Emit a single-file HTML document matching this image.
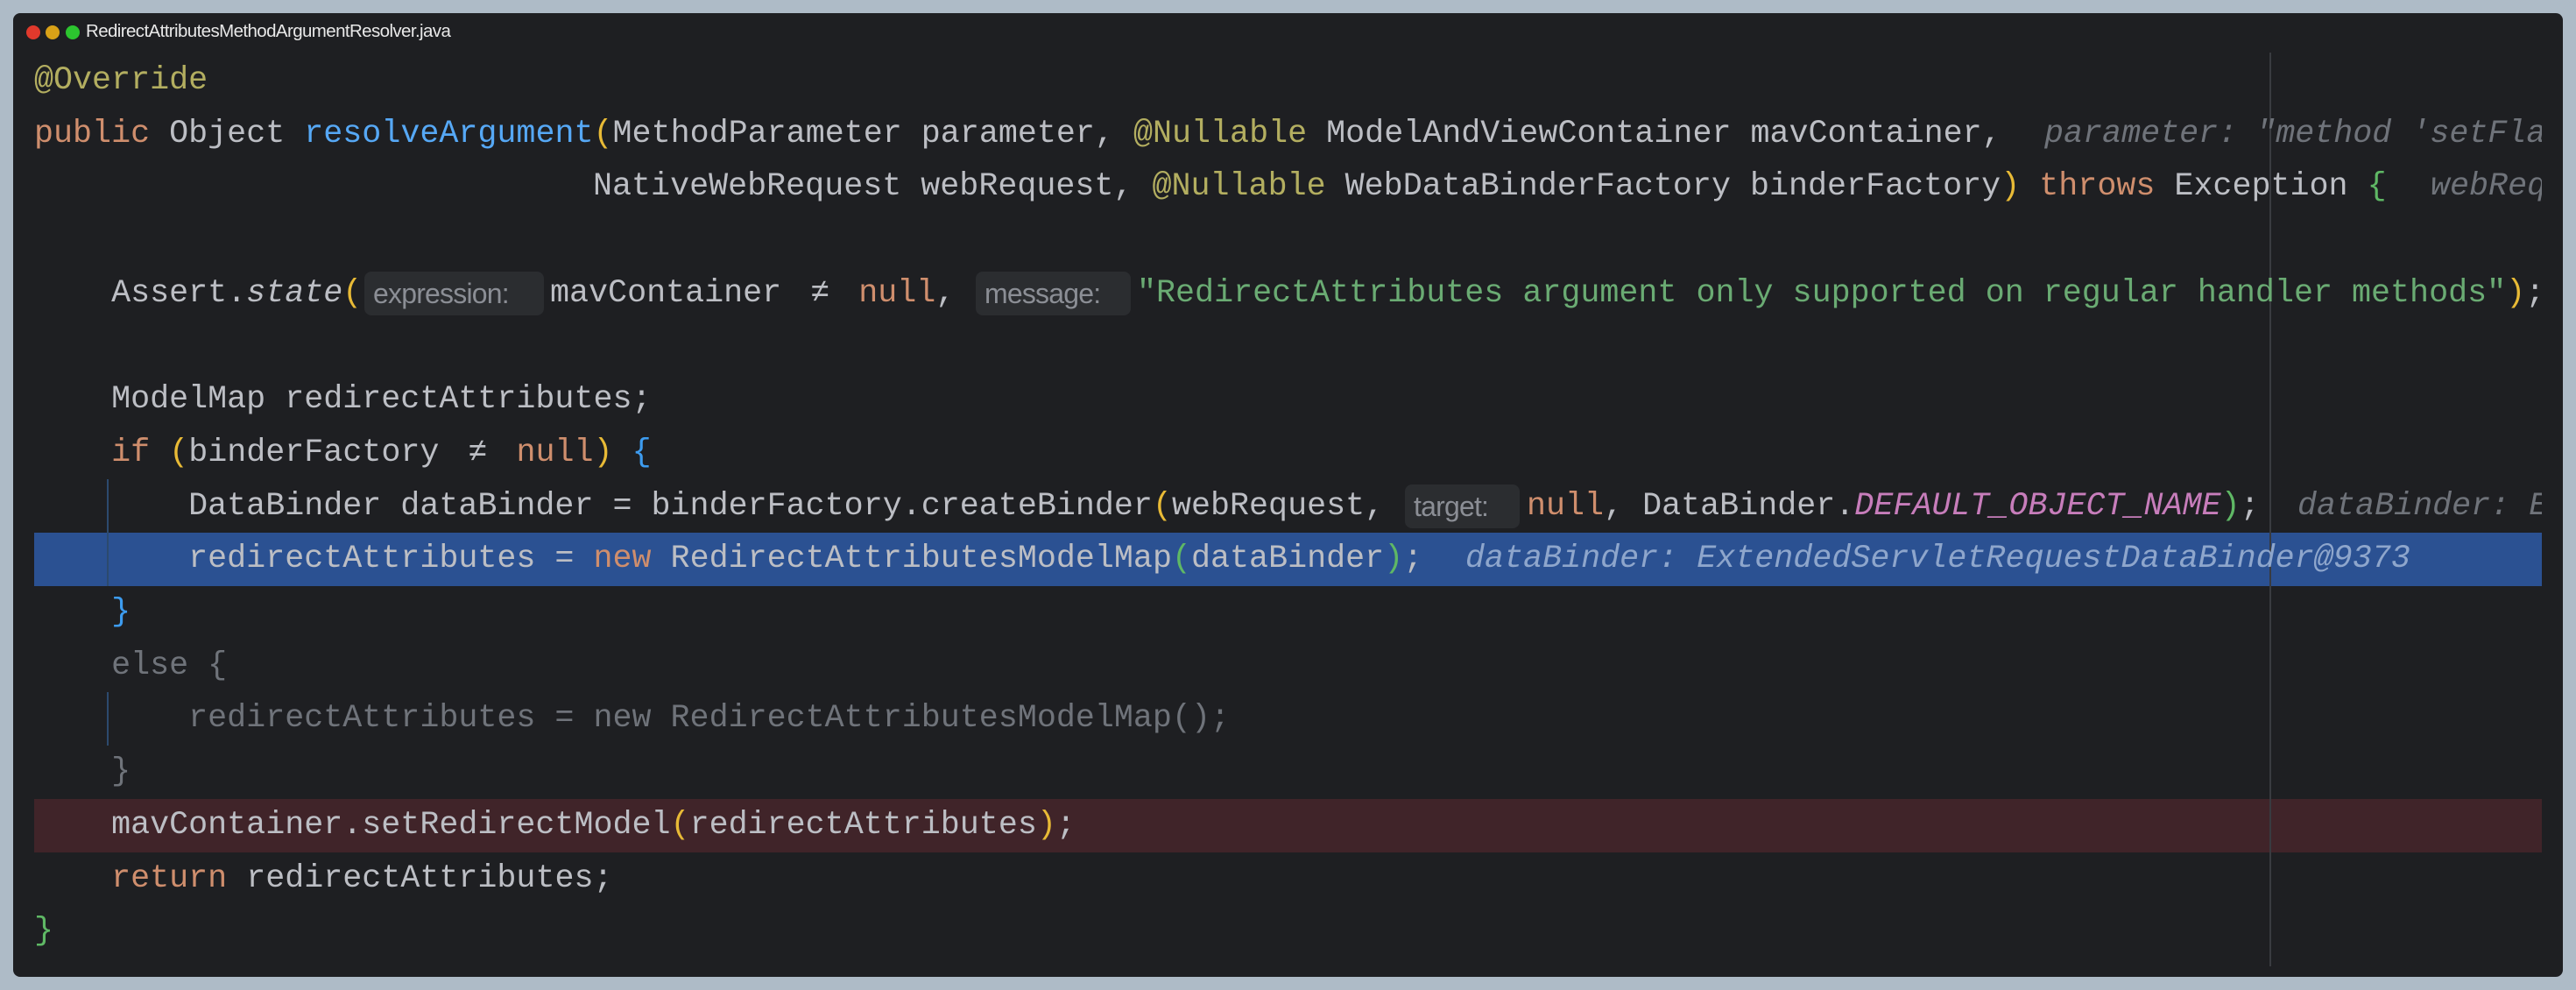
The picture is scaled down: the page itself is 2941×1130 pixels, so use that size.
<!DOCTYPE html>
<html><head><meta charset="utf-8"><style>
html,body{margin:0;padding:0}
body{width:2941px;height:1130px;background:#aebbc7;position:relative;overflow:hidden;font-family:"Liberation Mono",monospace}
.win{position:absolute;left:15px;top:15px;width:2911px;height:1100px;background:#1e1f22;border-radius:8px;overflow:hidden}
.dot{position:absolute;top:14px;width:16px;height:16px;border-radius:50%}
.title{position:absolute;left:83px;top:9px;font:20.5px "Liberation Sans",sans-serif;color:#e8e8e8;letter-spacing:-0.6px}
.ln{position:absolute;left:0;width:2863px;height:61px;line-height:61px;font-size:36.7px;color:#bcbec4;white-space:pre}
.s{position:absolute;top:0}
.k{color:#cf8e6d}.a{color:#b3ae60}.m{color:#56a8f5}.st{color:#6aab73}.y{color:#e8ba36}.gb{color:#5fb865}.bb{color:#3d9cf0}
.i{font-style:italic}.c{color:#c77dbb;font-style:italic}.d{color:#6f737a}
.hint{position:absolute;top:5px;height:50px;background:#2b2d30;border-radius:8px;color:#8b8e95;font:32px "Liberation Sans",sans-serif;line-height:50px;padding:0 0 0 10px;letter-spacing:-0.8px;box-sizing:border-box}
.ih{color:#6f737a;font-style:italic}
.ne{display:inline-block;width:44px;text-align:center}
.guide{position:absolute;width:2px;background:#2c4a6e}
</style></head><body>
<div class="win">
<div class="dot" style="left:15px;background:#e0392c"></div>
<div class="dot" style="left:37px;background:#d9a117"></div>
<div class="dot" style="left:60px;background:#2cc52f"></div>
<div class="title">RedirectAttributesMethodArgumentResolver.java</div>

<div style="position:absolute;left:24px;top:593px;width:2863px;height:61px;background:#2b5192"></div>
<div style="position:absolute;left:24px;top:897px;width:2863px;height:61px;background:#402429"></div>
<div style="position:absolute;left:2576px;top:45px;width:2px;height:1043px;background:#393b40"></div>
<div class="guide" style="left:107px;top:532px;height:122px"></div>
<div class="guide" style="left:107px;top:775px;height:61px"></div>

<div style="position:absolute;left:24px;top:47px;width:2863px;height:1050px;overflow:hidden">
<div class="ln" style="top:0"><span class="a">@Override</span></div>
<div class="ln" style="top:60.7px"><span class="k">public</span> Object <span class="m">resolveArgument</span><span class="y">(</span>MethodParameter parameter, <span class="a">@Nullable</span> ModelAndViewContainer mavContainer,<span class="s ih" style="left:2295px">parameter: "method 'setFlashAttributes</span></div>
<div class="ln" style="top:121.4px"><span class="s" style="left:638px">NativeWebRequest webRequest, <span class="a">@Nullable</span> WebDataBinderFactory binderFactory<span class="y">)</span> <span class="k">throws</span> Exception <span class="gb">{</span></span><span class="s ih" style="left:2736px">webRequest</span></div>
<div class="ln" style="top:242.8px">    Assert.<span class="i">state</span><span class="y">(</span><span class="hint" style="left:377px;width:205px">expression:</span><span class="s" style="left:589px">mavContainer <span class="ne">≠</span> <span class="k">null</span>,</span><span class="hint" style="left:1075px;width:177px">message:</span><span class="s" style="left:1259px"><span class="st">"RedirectAttributes argument only supported on regular handler methods"</span><span class="y">)</span>;</span></div>
<div class="ln" style="top:364.2px">    ModelMap redirectAttributes;</div>
<div class="ln" style="top:424.9px">    <span class="k">if</span> <span class="y">(</span>binderFactory <span class="ne">≠</span> <span class="k">null</span><span class="y">)</span> <span class="bb">{</span></div>
<div class="ln" style="top:485.6px">        DataBinder dataBinder = binderFactory.createBinder<span class="y">(</span>webRequest,<span class="hint" style="left:1565px;width:131px">target:</span><span class="s" style="left:1704px"><span class="k">null</span>, DataBinder.<span class="c">DEFAULT_OBJECT_NAME</span><span class="gb">)</span>;</span><span class="s ih" style="left:2584px">dataBinder: ExtendedServlet</span></div>
<div class="ln" style="top:546.3px">        redirectAttributes = <span class="k">new</span> RedirectAttributesModelMap<span class="gb">(</span>dataBinder<span class="gb">)</span>;<span class="s i" style="left:1634px;color:#8ea6cc">dataBinder: ExtendedServletRequestDataBinder@9373</span></div>
<div class="ln" style="top:607px">    <span class="bb">}</span></div>
<div class="ln d" style="top:667.7px">    else {</div>
<div class="ln d" style="top:728.4px">        redirectAttributes = new RedirectAttributesModelMap();</div>
<div class="ln d" style="top:789.1px">    }</div>
<div class="ln" style="top:849.8px">    mavContainer.setRedirectModel<span class="y">(</span>redirectAttributes<span class="y">)</span>;</div>
<div class="ln" style="top:910.5px">    <span class="k">return</span> redirectAttributes;</div>
<div class="ln" style="top:971.2px"><span class="gb">}</span></div>
</div>
</div>
</body></html>
